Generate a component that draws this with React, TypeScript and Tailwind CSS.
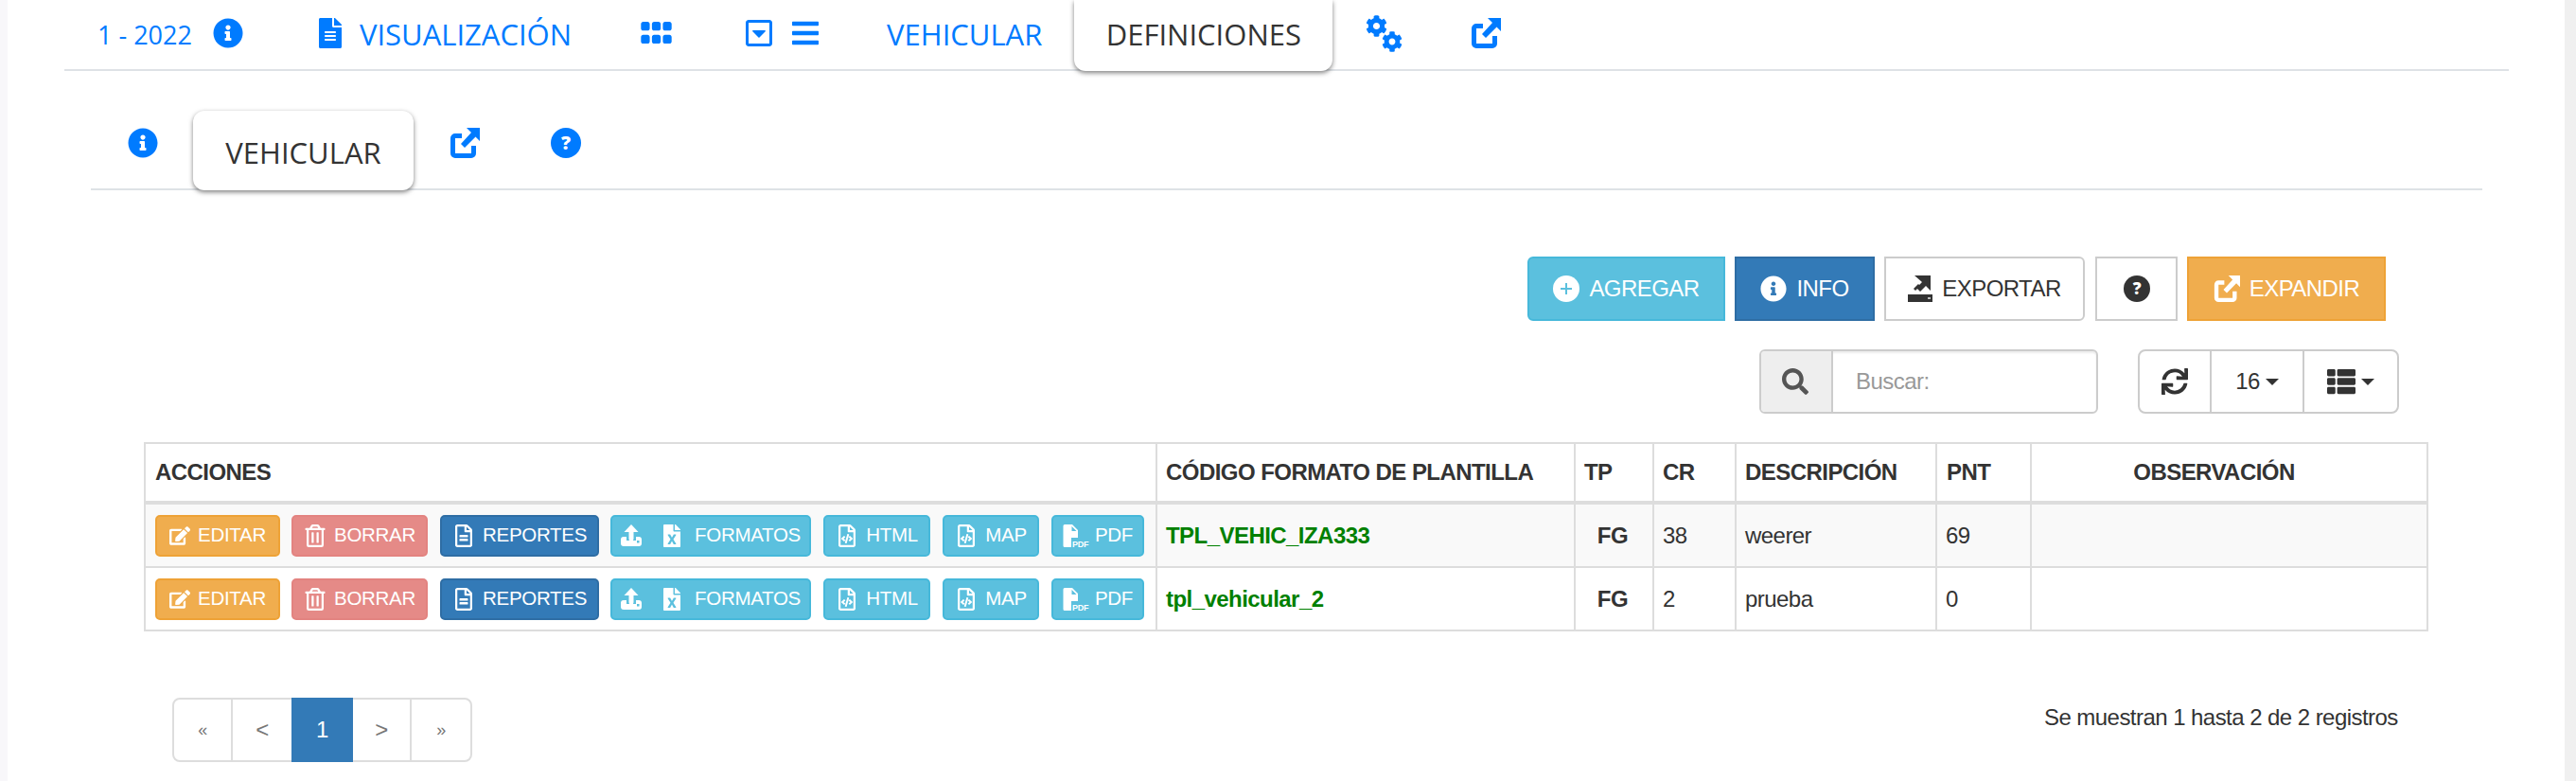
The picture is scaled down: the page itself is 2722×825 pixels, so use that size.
import React from "react";
import {
  FaInfoCircle, FaFileAlt, FaGripHorizontal, FaRegCaretSquareDown, FaBars, FaCog,
  FaSearch, FaSync, FaThList, FaEdit, FaRegTrashAlt, FaRegFileAlt,
  FaFileExcel, FaRegFileCode,
} from "react-icons/fa";

const OPEN = "font-['Open_Sans',sans-serif]";
const LIB = "font-['Liberation_Sans',Arial,sans-serif] tracking-[-0.55px]";

function LinkOut({ size, className = "" }: { size: number; className?: string }) {
  return (
    <svg width={size} height={size} viewBox="0 0 32 32" className={"shrink-0 " + className} fill="none">
      <path d="M13 8.5H6a2.5 2.5 0 0 0-2.5 2.5v16A2.5 2.5 0 0 0 6 29.500h17a2.500 2.500 0 0 0 2.500-2.500v-8" stroke="currentColor" strokeWidth="5" />
      <path d="M18 0h14v14l-4.500-4.500L16 21l-4-4L23 5z" fill="currentColor" />
    </svg>
  );
}

function QuestionIcon({ size, className = "" }: { size: number; className?: string }) {
  return (
    <svg width={size} height={size} viewBox="0 0 32 32" className={"shrink-0 " + className}>
      <circle cx="16" cy="16" r="16" fill="currentColor" />
      <text x="16" y="23" textAnchor="middle" fontSize="20" fontWeight="800" fill="#fff" fontFamily="Open Sans">?</text>
    </svg>
  );
}

function PlusIcon() {
  return (
    <svg width="28" height="28" viewBox="0 0 28 28" className="shrink-0">
      <circle cx="14" cy="14" r="14" fill="#fff" />
      <path d="M13 8h2v5h5v2h-5v5h-2v-5H8v-2h5z" fill="#5bc0de" />
    </svg>
  );
}

function PdfIcon() {
  return (
    <svg width="30" height="26" viewBox="0 0 30 26" className="shrink-0">
      <path d="M2 1h8l6 6v18H2a1.500 1.500 0 0 1-1.500-1.500v-21A1.500 1.500 0 0 1 2 1z" fill="#fff" />
      <path d="M9.500 3v5h5z" fill="#5bc0de" />
      <rect x="9" y="15" width="20" height="11" fill="#5bc0de" />
      <text x="10" y="24.500" fontSize="9" fontWeight="700" fill="#fff" fontFamily="Liberation Sans">PDF</text>
    </svg>
  );
}

function UploadIcon() {
  return (
    <svg width="22" height="23" viewBox="0 0 22 23" className="shrink-0">
      <rect x="0" y="13" width="22" height="10" rx="3" fill="#fff" />
      <rect x="6" y="12" width="10" height="5" fill="#5bc0de" />
      <path d="M11 0l7.500 8H13.500v7a2.500 2.500 0 0 1-5 0V8H3.500z" fill="#fff" />
      <rect x="17" y="17" width="2.500" height="2.500" fill="#5bc0de" />
    </svg>
  );
}

function ExportIcon() {
  return (
    <svg width="26" height="28" viewBox="0 0 26 28" className="shrink-0">
      <path d="M7 0h17v16l-5-5-6 6-4-4 6-6z" fill="#333" />
      <path d="M6 14l5-5 2 2-5 5z" fill="#333" />
      <path d="M0 20h26v8H0z" fill="#333" />
      <rect x="21" y="23" width="3" height="2" fill="#bbb" />
    </svg>
  );
}

function Gears() {
  return (
    <span className="ml-[35px] mt-[16px] flex items-start">
      <FaCog size={23} />
      <FaCog size={22} className="ml-[-6px] mt-[17px]" />
    </span>
  );
}

function Caret() {
  return <span className="inline-block w-0 h-0 border-x-[7px] border-x-transparent border-t-[7px] border-t-[#333]" />;
}

type BtnProps = { w: string; cls: string; children: React.ReactNode };
function Btn({ w, cls, children }: BtnProps) {
  return (
    <span className={"flex h-[44px] items-center justify-center rounded-[5px] border-2 text-[20.5px] tracking-[-0.3px] text-white " + w + " " + cls}>
      {children}
    </span>
  );
}

const INFO = "bg-[#5bc0de] border-[#46b8da]";

function Actions() {
  return (
    <div className="flex items-center">
      <Btn w="w-[132px]" cls="gap-[8px] bg-[#f0ad4e] border-[#eea236]"><FaEdit size={22} />EDITAR</Btn>
      <Btn w="w-[144px] ml-[12px]" cls="gap-[8px] bg-[#e58a87] border-[#e38380]"><FaRegTrashAlt size={24} />BORRAR</Btn>
      <Btn w="w-[168px] ml-[13px]" cls="gap-[8px] bg-[#337ab7] border-[#2e6da4]"><FaRegFileAlt size={24} />REPORTES</Btn>
      <Btn w="w-[212px] ml-[12px]" cls={"gap-[12px] " + INFO}><UploadIcon /><FaFileExcel size={24} className="ml-[8px]" />FORMATOS</Btn>
      <Btn w="w-[113px] ml-[13px]" cls={"gap-[8px] " + INFO}><FaRegFileCode size={24} />HTML</Btn>
      <Btn w="w-[102px] ml-[13px]" cls={"gap-[8px] " + INFO}><FaRegFileCode size={24} />MAP</Btn>
      <Btn w="w-[98px] ml-[13px]" cls={"gap-[4px] " + INFO}><PdfIcon />PDF</Btn>
    </div>
  );
}

const rows = [
  { code: "TPL_VEHIC_IZA333", cr: "38", d: "weerer", p: "69", bg: "bg-[#f9f9f9]", h: "h-[67px]" },
  { code: "tpl_vehicular_2", cr: "2", d: "prueba", p: "0", bg: "bg-white", h: "h-[65px]" },
];

const CELL = "border-l-2 border-[#ddd] flex items-center";

export default function App() {
  return (
    <div className="flex w-[2722px] h-[825px] overflow-hidden text-[#333]">
      <div className="w-[8px] bg-[#f8f7fa]" />
      <div className="w-[2702px] h-[825px] bg-white overflow-hidden">
        {/* top nav */}
        <div className={"ml-[60px] w-[2583px] h-[75px] border-b-2 border-[#dee2e6] flex items-start text-[#007bff] " + OPEN}>
          <span className="ml-[35px] mt-[19px] text-[27px] leading-[36px]">1 - 2022</span>
          <FaInfoCircle size={32} className="ml-[22px] mt-[19px]" />
          <FaFileAlt size={32} className="ml-[76px] mt-[19px]" />
          <span className="ml-[15px] mt-[15px] text-[31px] leading-[42px]">VISUALIZACIÓN</span>
          <FaGripHorizontal size={37} className="ml-[71px] mt-[16px]" />
          <FaRegCaretSquareDown size={32} className="ml-[74px] mt-[19px]" />
          <FaBars size={32} className="ml-[17px] mt-[19px]" />
          <span className="ml-[70px] mt-[15px] text-[31px] leading-[42px]">VEHICULAR</span>
          <span className="ml-[34px] w-[273px] h-[75px] rounded-b-[12px] bg-white shadow-[0_2px_5px_rgba(0,0,0,0.5)] text-[#333] text-[31px] leading-[42px] flex justify-center pt-[15px]">DEFINICIONES</span>
          <Gears />
          <LinkOut size={32} className="ml-[72px] mt-[19px]" />
        </div>

        {/* second nav */}
        <div className={"ml-[88px] w-[2527px] h-[126px] border-b-2 border-[#dee2e6] flex items-start text-[#007bff] " + OPEN}>
          <FaInfoCircle size={32} className="ml-[39px] mt-[60px]" />
          <span className="ml-[37px] mt-[42px] w-[233px] h-[84px] rounded-[12px] bg-white shadow-[0_2px_5px_rgba(0,0,0,0.5)] text-[#333] text-[31px] leading-[42px] flex justify-center pt-[23px]">VEHICULAR</span>
          <LinkOut size={32} className="ml-[38px] mt-[60px]" />
          <QuestionIcon size={32} className="ml-[75px] mt-[60px]" />
        </div>

        {/* toolbar */}
        <div className={"mt-[70px] ml-[1606px] flex h-[68px] text-[24px] " + LIB}>
          <span className="w-[209px] flex items-center justify-center gap-[10px] rounded-l-[6px] bg-[#5bc0de] border-2 border-[#46b8da] text-white"><PlusIcon />AGREGAR</span>
          <span className="ml-[10px] w-[148px] flex items-center justify-center gap-[10px] bg-[#337ab7] border-2 border-[#2e6da4] text-white"><FaInfoCircle size={28} />INFO</span>
          <span className="ml-[10px] w-[212px] flex items-center justify-center gap-[10px] rounded-r-[6px] bg-white border-2 border-[#ccc]"><ExportIcon />EXPORTAR</span>
          <span className="ml-[11px] w-[87px] flex items-center justify-center bg-white border-2 border-[#ccc]"><QuestionIcon size={28} /></span>
          <span className="ml-[10px] w-[210px] flex items-center justify-center gap-[10px] bg-[#f0ad4e] border-2 border-[#eea236] text-white"><LinkOut size={28} />EXPANDIR</span>
        </div>

        {/* search + tools */}
        <div className={"mt-[30px] ml-[1851px] flex h-[68px] text-[24px] " + LIB}>
          <div className="w-[358px] flex rounded-[6px] border-2 border-[#ccc] shadow-[inset_0_2px_2px_rgba(0,0,0,0.08)] overflow-hidden">
            <span className="w-[76px] pr-[2px] flex items-center justify-center bg-[#eee] border-r-2 border-[#ccc] text-[#555]"><FaSearch size={28} /></span>
            <span className="pl-[24px] flex items-center text-[#999]">Buscar:</span>
          </div>
          <div className="ml-[42px] w-[276px] flex rounded-[8px] border-2 border-[#ccc]">
            <span className="w-[76px] flex items-center justify-center border-r-2 border-[#ccc]"><FaSync size={28} /></span>
            <span className="w-[98px] flex items-center justify-center gap-[6px] border-r-2 border-[#ccc]">16<Caret /></span>
            <span className="flex-1 flex items-center justify-center gap-[6px]"><FaThList size={30} /><Caret /></span>
          </div>
        </div>

        {/* table */}
        <div className={"mt-[30px] ml-[144px] w-[2414px] border-2 border-[#ddd] text-[24px] " + LIB}>
          <div className="flex h-[64px] font-bold border-b-4 border-[#ddd]">
            <div className="w-[1067px] flex items-center pl-[10px]">ACCIONES</div>
            <div className={"w-[442px] pl-[9px] " + CELL}>CÓDIGO FORMATO DE PLANTILLA</div>
            <div className={"w-[83px] pl-[9px] " + CELL}>TP</div>
            <div className={"w-[87px] pl-[9px] " + CELL}>CR</div>
            <div className={"w-[212px] pl-[9px] " + CELL}>DESCRIPCIÓN</div>
            <div className={"w-[100px] pl-[10px] " + CELL}>PNT</div>
            <div className={"flex-1 justify-center pr-[32px] " + CELL}>OBSERVACIÓN</div>
          </div>
          {rows.map((r, i) => (
            <div key={r.code} className={"flex " + r.h + " " + r.bg + (i === 0 ? " border-b-2 border-[#ddd]" : "")}>
              <div className="w-[1067px] flex items-center pl-[10px]"><Actions /></div>
              <div className={"w-[442px] pl-[9px] font-bold text-[#008000] " + CELL}>{r.code}</div>
              <div className={"w-[83px] pr-[26px] justify-end font-bold " + CELL}>FG</div>
              <div className={"w-[87px] pl-[9px] " + CELL}>{r.cr}</div>
              <div className={"w-[212px] pl-[9px] " + CELL}>{r.d}</div>
              <div className={"w-[100px] pl-[9px] " + CELL}>{r.p}</div>
              <div className={"flex-1 " + CELL} />
            </div>
          ))}
        </div>

        {/* footer */}
        <div className={"mt-[70px] ml-[174px] flex items-start text-[24px] " + LIB}>
          <div className="flex h-[68px] w-[317px] rounded-[8px] border-2 border-[#ddd] text-[#777]">
            <span className="w-[62px] flex items-center justify-center border-r-2 border-[#ddd] text-[18px]">«</span>
            <span className="w-[62px] flex items-center justify-center">&lt;</span>
            <span className="w-[65px] -my-[2px] flex items-center justify-center bg-[#337ab7] text-white">1</span>
            <span className="w-[62px] flex items-center justify-center border-r-2 border-[#ddd]">&gt;</span>
            <span className="flex-1 flex items-center justify-center text-[18px]">»</span>
          </div>
          <span className="ml-[1661px] mt-[3px] leading-[36px] whitespace-nowrap">Se muestran 1 hasta 2 de 2 registros</span>
        </div>
      </div>
      <div className="w-[12px] bg-[#f0f0f0]" />
    </div>
  );
}
